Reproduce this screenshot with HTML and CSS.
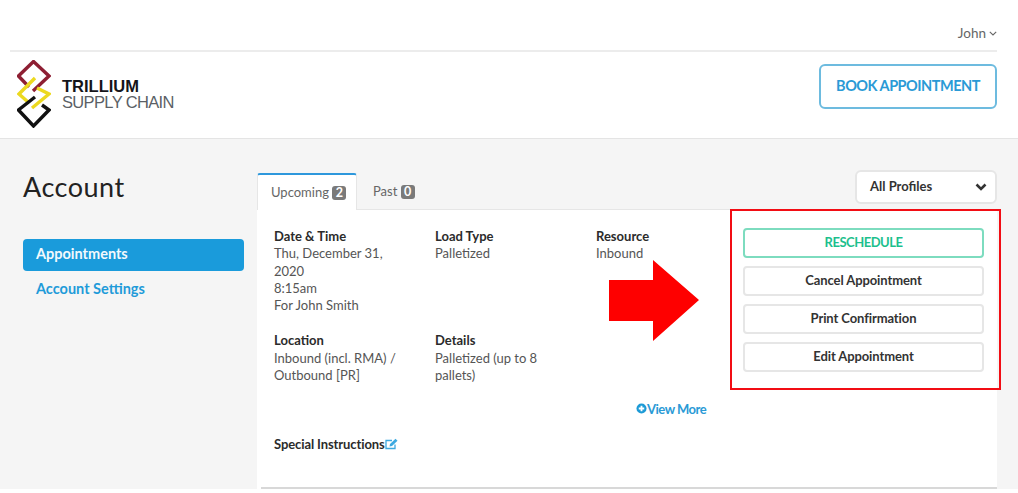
FILE: index.html
```html
<!DOCTYPE html>
<html lang="en">
<head>
<meta charset="utf-8">
<title>Account</title>
<link rel="stylesheet" href="styles.css">
</head>
<body>
<header class="site-header">
  <div class="user-bar">
    <span class="user-name">John</span>
    <svg class="user-caret" viewBox="0 0 8 5"><path d="M.8 .8l3.200 3.200 3.200-3.200" fill="none" stroke="#666" stroke-width="1.100"/></svg>
  </div>
  <div class="brand-bar">
    <div class="brand">
      <svg class="brand-mark" viewBox="0 0 34 68">
        <g fill="none" stroke-width="3.4">
          <path d="M12 27L1.500 16 16.500 1.500 32 16 16 31" stroke="#8e1f33"/>
          <path d="M18 18L2 34 11 42M20 28L32 34 15 48" stroke="#ecd91f"/>
          <path d="M18 37L1.500 50 16.500 66 32 50 25 45" stroke="#111"/>
        </g>
      </svg>
      <div class="brand-text">
        <div class="brand-top">TRILLIUM</div>
        <div class="brand-bottom">SUPPLY CHAIN</div>
      </div>
    </div>
    <a class="book-btn">BOOK APPOINTMENT</a>
  </div>
</header>
<div class="page">
  <aside class="sidebar">
    <h1 class="page-title">Account</h1>
    <nav class="side-nav">
      <a class="side-link active">Appointments</a>
      <a class="side-link">Account Settings</a>
    </nav>
  </aside>
  <main class="content">
    <div class="tab-row">
      <div class="tabs">
        <div class="tab current">Upcoming <span class="count">2</span></div>
        <div class="tab">Past <span class="count">0</span></div>
      </div>
      <div class="profile-select">
        <span>All Profiles</span>
        <svg class="select-caret" viewBox="0 0 12 8"><path d="M1.500 1.500L6 6l4.500-4.500" fill="none" stroke="#333" stroke-width="2.600"/></svg>
      </div>
    </div>
    <section class="card">
      <div class="card-main">
        <div class="details">
          <div class="field"><h3>Date &amp; Time</h3><p>Thu, December 31, 2020<br>8:15am<br>For John Smith</p></div>
          <div class="field"><h3>Load Type</h3><p>Palletized</p></div>
          <div class="field"><h3>Resource</h3><p>Inbound</p></div>
          <div class="field"><h3>Location</h3><p>Inbound (incl. RMA) / Outbound [PR]</p></div>
          <div class="field"><h3>Details</h3><p>Palletized (up to 8 pallets)</p></div>
        </div>
        <div class="actions">
          <a class="action primary">RESCHEDULE</a>
          <a class="action">Cancel Appointment</a>
          <a class="action">Print Confirmation</a>
          <a class="action">Edit Appointment</a>
        </div>
      </div>
      <a class="view-more"><svg class="plus" viewBox="0 0 12 12"><circle cx="6" cy="6" r="5.500" fill="#1c9ad6"/><path d="M6 3v6M3 6h6" stroke="#fff" stroke-width="2"/></svg>View More</a>
      <div class="special"><h3>Special Instructions</h3><svg class="edit" viewBox="0 0 13 12"><path d="M10 6.500V10.500H1V2.500H7" fill="none" stroke="#3da9e0" stroke-width="1.300"/><path d="M4.500 8.500L5 6 10.500 .8 12.500 2.800 7 8z" fill="#3da9e0"/></svg></div>
      <div class="card-rule"></div>
    </section>
  </main>
</div>
<div class="callout-box"></div>
<svg class="callout-arrow" viewBox="0 0 90 81"><path d="M0 20H44V0L90 40 44 81V61H0z" fill="#fe0000"/></svg>
</body>
</html>
```
FILE: styles.css
```css
* { box-sizing: border-box; }
html, body { margin: 0; height: 100%; }
body {
  position: relative;
  height: 493px;
  overflow: hidden;
  background: #fff;
  font-family: "Lato", "Open Sans", sans-serif;
  font-size: 13px;
  color: #555;
}
.site-header { background: #fff; border-bottom: 1px solid #e4e4e4; height: 139px; }
.user-bar {
  height: 52px;
  margin: 0 21px 0 10px;
  border-bottom: 2px solid #ececec;
  display: flex;
  justify-content: flex-end;
  align-items: center;
  gap: 3px;
  padding-top: 15px;
  color: #666;
  font-size: 13.500px;
}
.user-caret { width: 8px; height: 5px; margin-top: 2px; }
.brand-bar {
  height: 86px;
  padding: 0 21px 0 17px;
  display: flex;
  justify-content: space-between;
  align-items: flex-start;
}
.brand { display: flex; align-items: center; gap: 11px; padding-top: 8px; }
.brand-mark { width: 34px; height: 68px; flex: none; }
.brand-text { margin-top: 0; font-family: "Liberation Sans", sans-serif; line-height: 16px; }
.brand-top { font-size: 16.500px; font-weight: 700; color: #15151a; }
.brand-bottom { font-size: 16.500px; color: #5b5f66; letter-spacing: -.65px; }
.book-btn {
  width: 178px;
  height: 45px;
  margin-top: 12px;
  border: 2px solid #6dbbdf;
  border-radius: 6px;
  display: flex;
  align-items: center;
  justify-content: center;
  padding-bottom: 2px;
  color: #2a9ad6;
  font-size: 14.500px;
  font-weight: 700;
  letter-spacing: -.5px;
}
.page { display: flex; height: 350px; padding: 31px 21px 0 23px; gap: 13px; background: #f5f5f5; }
.sidebar { width: 221px; flex: none; }
.page-title { margin: 0 0 36px; font-size: 27px; line-height: 33px; font-weight: 400; color: #222; letter-spacing: .5px; }
.side-nav { display: flex; flex-direction: column; gap: 3px; }
.side-link {
  height: 32px;
  padding: 0 0 3px 13px;
  display: flex;
  align-items: center;
  color: #1f9bd9;
  font-size: 14.500px;
  font-weight: 700;
  border-radius: 4px;
}
.side-link.active { background: #1a9bdb; color: #f2f9fd; }
.content { flex: 1; min-width: 0; }
.tab-row {
  height: 40px;
  display: flex;
  justify-content: space-between;
  align-items: flex-start;
  border-bottom: 1px solid #e6e6e6;
}
.tabs { display: flex; align-items: flex-end; height: 40px; }
.tab { width: 100px; height: 37px; padding: 10px 0 0 13px; color: #666; }
.tab + .tab { width: 74px; padding: 10px 0 0 16px; }
.tab.current { background: #fff; border-top: 2px solid #2e98dc; border-left: 1px solid #e6e6e6; border-right: 1px solid #e6e6e6; border-radius: 3px 3px 0 0; height: 37px; padding-top: 9px; }
.count {
  display: inline-block;
  min-width: 14px;
  padding: 0 3px;
  background: #7a7a7a;
  color: #fff;
  border-radius: 3px;
  font-size: 12.500px;
  font-weight: 700;
  line-height: 14px;
  text-align: center;
}
.profile-select {
  width: 142px;
  height: 34px;
  background: #fff;
  border: 2px solid #e6e6e6;
  border-radius: 6px;
  padding: 0 8px 2px 13px;
  display: flex;
  align-items: center;
  justify-content: space-between;
  color: #333;
  font-weight: 700;
}
.select-caret { width: 12px; height: 8px; margin-top: 1px; }
.card {
  background: #fff;
  height: 283px;
  padding: 18px 13px 4px 17px;
  display: flex;
  flex-direction: column;
}
.card-main { display: flex; height: 155px; flex: none; }
.details { width: 469px; flex: none; display: grid; grid-template-columns: 161px 161px 147px; grid-auto-rows: max-content; row-gap: 18px; }
.field { padding-right: 31px; line-height: 17.300px; }
.field h3, .special h3 { margin: 0; font-size: 13px; font-weight: 700; color: #2b2b2b; }
.field p { margin: 0; }
.actions { width: 241px; flex: none; display: flex; flex-direction: column; gap: 8px; }
.action {
  height: 30px;
  background: #fff;
  border: 2px solid #e6e6e6;
  border-radius: 4px;
  display: flex;
  align-items: center;
  justify-content: center;
  padding-bottom: 3px;
  color: #333;
  font-weight: 700;
  letter-spacing: -.1px;
}
.action.primary { border-color: #7ddcbf; color: #1dbf8d; letter-spacing: -.5px; }
.view-more {
  margin: 17px 0 0 362px;
  display: flex;
  align-items: center;
  width: 90px;
  height: 17px;
  color: #2a9ad6;
  font-weight: 700;
  letter-spacing: -.5px;
}
.plus { width: 11px; height: 11px; flex: none; }
.special { margin-top: 18px; height: 17px; display: flex; align-items: center; letter-spacing: -.1px; }
.edit { width: 13px; height: 12px; flex: none; }
.card-rule { margin: auto -13px 0 -13px; height: 2px; background: #d8d8d8; }
.callout-box {
  position: absolute;
  left: 730px;
  top: 209px;
  width: 271px;
  height: 181px;
  border: 2px solid #f20d14;
}
.callout-arrow { position: absolute; left: 609px; top: 260px; width: 90px; height: 81px; }
```
